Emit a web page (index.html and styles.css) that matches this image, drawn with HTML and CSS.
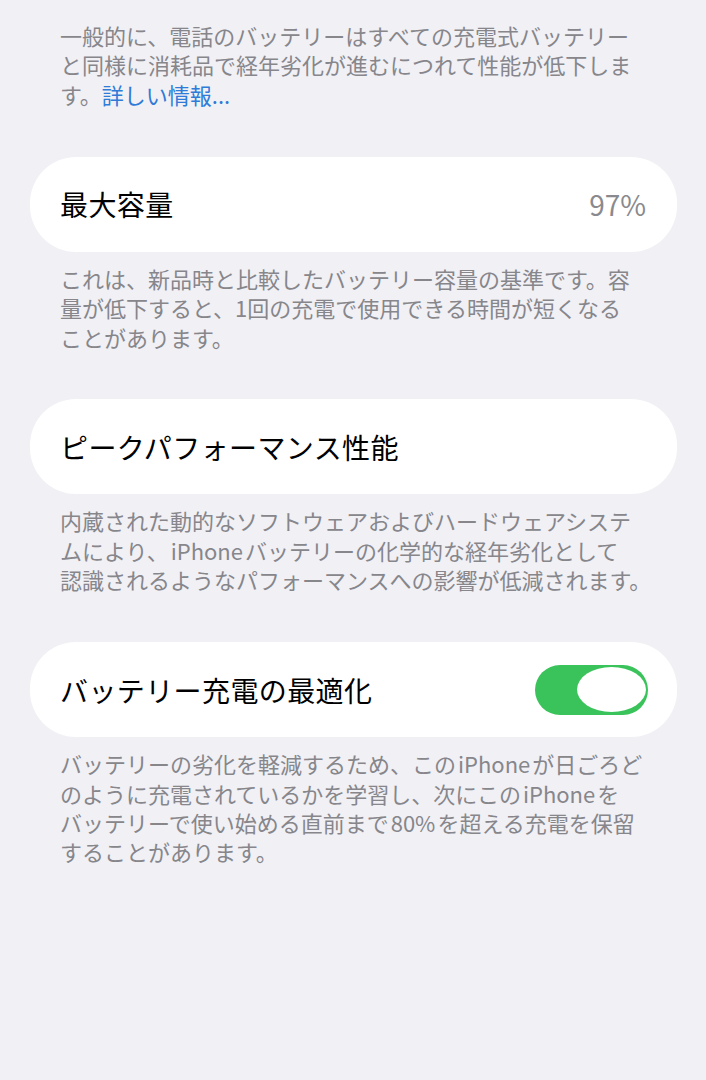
FILE: index.html
```html
<!DOCTYPE html>
<html lang="ja">
<head>
  <meta charset="UTF-8">
  <meta name="viewport" content="width=device-width, initial-scale=1.0">
  <title>バッテリーの状態と充電</title>
  <link rel="stylesheet" href="styles.css">
</head>
<body>
  <div class="page">
    <p class="footer">
      一般的に、電話のバッテリーはすべての充電式バッテリー<br>
      と同様に消耗品で経年劣化が進むにつれて性能が低下しま<br>
      す。<a href="#" class="link">詳しい情報...</a>
    </p>

    <div class="cell">
      <span class="cell-title">最大容量</span>
      <span class="cell-value">97%</span>
    </div>
    <p class="footer">
      これは、新品時と比較したバッテリー容量の基準です。容<br>
      量が低下すると、1回の充電で使用できる時間が短くなる<br>
      ことがあります。
    </p>

    <div class="cell">
      <span class="cell-title">ピークパフォーマンス性能</span>
    </div>
    <p class="footer">
      内蔵された動的なソフトウェアおよびハードウェアシステ<br>
      ムにより、<span class="latin">iPhone</span>バッテリーの化学的な経年劣化として<br>
      認識されるようなパフォーマンスへの影響が低減されます。
    </p>

    <div class="cell">
      <span class="cell-title">バッテリー充電の最適化</span>
      <div class="toggle on"><div class="knob"></div></div>
    </div>
    <p class="footer">
      バッテリーの劣化を軽減するため、この<span class="latin">iPhone</span>が日ごろど<br>
      のように充電されているかを学習し、次にこの<span class="latin">iPhone</span>を<br>
      バッテリーで使い始める直前まで<span class="latin">80%</span>を超える充電を保留<br>
      することがあります。
    </p>
  </div>
</body>
</html>
```

FILE: styles.css
```css
body {
  margin: 0;
  background-color: #f1f0f5;
  font-family: "Noto Sans CJK JP", "Noto Sans", sans-serif;
  color: #000;
}
.page {
  padding-top: 21px;
}
.footer {
  margin: 0;
  padding: 0 30px 0 60px;
  font-size: 22px;
  line-height: 29.4px;
  color: #86868b;
  white-space: nowrap;
}
.footer .latin {
  margin: 0 2px;
}
.link {
  color: #2f7bd8;
  text-decoration: none;
}
.cell {
  display: flex;
  align-items: center;
  justify-content: space-between;
  height: 95px;
  margin: 47.5px 29px 12px 30px;
  padding: 0 29px 0 30px;
  background-color: #fff;
  border-radius: 46px;
}
.cell-title {
  font-size: 28px;
  letter-spacing: 0.4px;
}
.cell-value {
  font-size: 28px;
  color: #8a8a8e;
  padding-right: 2px;
}
.toggle {
  width: 113px;
  height: 50px;
  border-radius: 25px;
  background-color: #d9d9de;
  display: flex;
  align-items: center;
  padding: 0 2px;
  box-sizing: border-box;
}
.toggle.on {
  background-color: #3ac35b;
  justify-content: flex-end;
}
.knob {
  width: 69px;
  height: 45px;
  border-radius: 50%;
  background-color: #fff;
}
```
